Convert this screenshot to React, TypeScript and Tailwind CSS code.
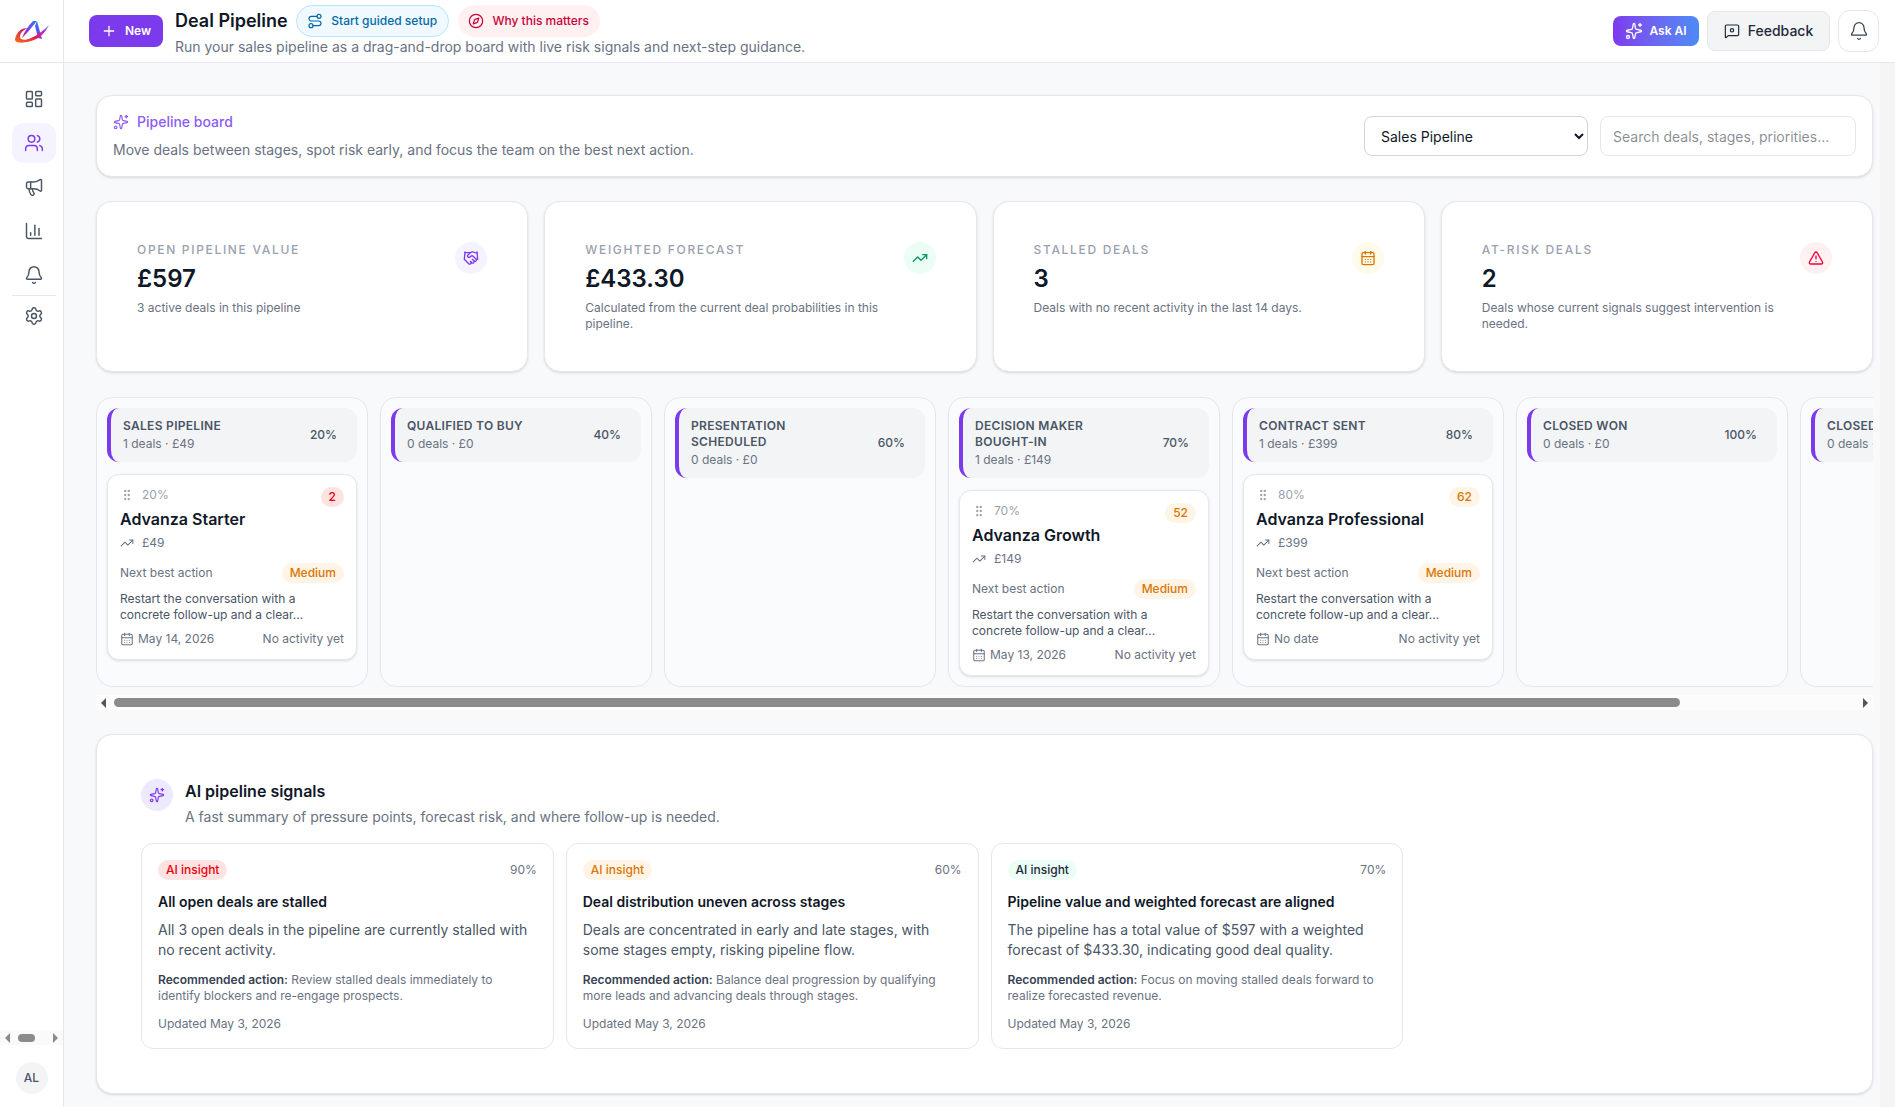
import {
  Bell,
  CalendarDays,
  ChartColumn,
  Compass,
  GripVertical,
  Handshake,
  LayoutDashboard,
  Megaphone,
  Plus,
  Route,
  Settings,
  Sparkles,
  TrendingUp,
  TriangleAlert,
  Users,
} from "lucide-react";

type Deal = {
  pct: string;
  name: string;
  amount: string;
  score: string;
  scoreColor: string;
  date: string;
};

type Stage = {
  title: string;
  sub: string;
  pct: string;
  deal?: Deal;
};

const stages: Stage[] = [
  {
    title: "Sales Pipeline",
    sub: "1 deals · £49",
    pct: "20%",
    deal: {
      pct: "20%",
      name: "Advanza Starter",
      amount: "£49",
      score: "2",
      scoreColor: "bg-red-100 text-red-600",
      date: "May 14, 2026",
    },
  },
  { title: "Qualified to Buy", sub: "0 deals · £0", pct: "40%" },
  { title: "Presentation Scheduled", sub: "0 deals · £0", pct: "60%" },
  {
    title: "Decision Maker Bought-In",
    sub: "1 deals · £149",
    pct: "70%",
    deal: {
      pct: "70%",
      name: "Advanza Growth",
      amount: "£149",
      score: "52",
      scoreColor: "bg-[#fff4e5] text-[#d97706]",
      date: "May 13, 2026",
    },
  },
  {
    title: "Contract Sent",
    sub: "1 deals · £399",
    pct: "80%",
    deal: {
      pct: "80%",
      name: "Advanza Professional",
      amount: "£399",
      score: "62",
      scoreColor: "bg-[#fff4e5] text-[#d97706]",
      date: "No date",
    },
  },
  { title: "Closed Won", sub: "0 deals · £0", pct: "100%" },
  { title: "Closed Lost", sub: "0 deals · £0", pct: "0%" },
];

const stats = [
  {
    label: "Open pipeline value",
    value: "£597",
    desc: "3 active deals in this pipeline",
    icon: Handshake,
    color: "bg-violet-50 text-[#7c3aed]",
  },
  {
    label: "Weighted forecast",
    value: "£433.30",
    desc: "Calculated from the current deal probabilities in this pipeline.",
    icon: TrendingUp,
    color: "bg-emerald-50 text-emerald-600",
  },
  {
    label: "Stalled deals",
    value: "3",
    desc: "Deals with no recent activity in the last 14 days.",
    icon: CalendarDays,
    color: "bg-amber-50 text-[#d97706]",
  },
  {
    label: "At-risk deals",
    value: "2",
    desc: "Deals whose current signals suggest intervention is needed.",
    icon: TriangleAlert,
    color: "bg-rose-50 text-rose-600",
  },
];

const insights = [
  {
    pill: "bg-red-100 text-red-600",
    pct: "90%",
    title: "All open deals are stalled",
    body: "All 3 open deals in the pipeline are currently stalled with no recent activity.",
    action: "Review stalled deals immediately to identify blockers and re-engage prospects.",
  },
  {
    pill: "bg-[#fff4e5] text-[#d97706]",
    pct: "60%",
    title: "Deal distribution uneven across stages",
    body: "Deals are concentrated in early and late stages, with some stages empty, risking pipeline flow.",
    action: "Balance deal progression by qualifying more leads and advancing deals through stages.",
  },
  {
    pill: "bg-emerald-50 text-gray-800",
    pct: "70%",
    title: "Pipeline value and weighted forecast are aligned",
    body: "The pipeline has a total value of $597 with a weighted forecast of $433.30, indicating good deal quality.",
    action: "Focus on moving stalled deals forward to realize forecasted revenue.",
  },
];

function Logo() {
  return (
    <svg width="36" height="23" viewBox="0 0 36 23" fill="none">
      <defs>
        <linearGradient id="logoArm" x1="1" y1="0" x2="0" y2="1">
          <stop offset="0" stopColor="#2f7bf0" />
          <stop offset="0.6" stopColor="#7c3aed" />
          <stop offset="1" stopColor="#db2777" />
        </linearGradient>
        <linearGradient id="logoLeg" x1="0" y1="0" x2="0" y2="1">
          <stop offset="0" stopColor="#2f7bf0" />
          <stop offset="1" stopColor="#7c3aed" />
        </linearGradient>
        <linearGradient id="logoSwoosh" x1="0" y1="1" x2="1" y2="0">
          <stop offset="0" stopColor="#f97316" />
          <stop offset="0.45" stopColor="#e11d48" />
          <stop offset="0.75" stopColor="#c026d3" />
          <stop offset="1" stopColor="#38bdf8" />
        </linearGradient>
      </defs>
      <path d="M19 1h4L13 13c-2 2-3 3-5 5C10 12 14 6 19 1Z" fill="url(#logoArm)" />
      <path d="M23 1l5 18-4-1-3-12Z" fill="url(#logoLeg)" />
      <path
        d="M1 19C3 11 8 8 14 8 9 10 6 13 6 17c0 3 5 4 11 1 7-3 13-8 18-13-3 7-10 14-18 16C9 23 1 24 1 19Z"
        fill="url(#logoSwoosh)"
      />
    </svg>
  );
}

function Sidebar() {
  const items = [LayoutDashboard, Users, Megaphone, ChartColumn, Bell];
  return (
    <aside className="flex h-full w-16 shrink-0 flex-col border-r border-gray-200 bg-white">
      <div className="flex h-[63px] shrink-0 items-center justify-center border-b border-gray-200">
        <Logo />
      </div>
      <nav className="mt-4 flex flex-col gap-1 pl-3 pr-[7px]">
        {items.map((Icon, i) => (
          <div
            key={i}
            className={`flex h-10 items-center justify-center rounded-xl ${
              i === 1 ? "bg-violet-50 text-[#7c3aed]" : "text-gray-600"
            }`}
          >
            <Icon className="h-5 w-5" strokeWidth={1.75} />
          </div>
        ))}
        <div className="-mt-1 border-t border-gray-200" />
        <div className="flex h-8 items-center justify-center text-gray-600">
          <Settings className="h-5 w-5" strokeWidth={1.75} />
        </div>
      </nav>
      <div className="mt-auto flex h-[15px] items-center bg-[#fafafa] px-[5px]">
        <div className="h-0 w-0 border-y-[5px] border-r-[5px] border-y-transparent border-r-[#8b8b8b]" />
        <div className="ml-2 h-2 w-[17px] rounded-full bg-[#8b8b8b]" />
        <div className="ml-auto h-0 w-0 border-y-[5px] border-l-[5px] border-y-transparent border-l-[#8b8b8b]" />
      </div>
      <div className="flex h-[62px] shrink-0 justify-center pt-[17px]">
        <div className="flex h-8 w-8 items-center justify-center rounded-full bg-gray-100 text-xs font-medium text-gray-600">
          AL
        </div>
      </div>
    </aside>
  );
}

function FeedbackIcon() {
  return (
    <svg
      className="h-4 w-4"
      viewBox="0 0 24 24"
      fill="none"
      stroke="currentColor"
      strokeWidth={1.75}
      strokeLinecap="round"
      strokeLinejoin="round"
    >
      <path d="M22 17a2 2 0 0 1-2 2H6.828a2 2 0 0 0-1.414.586l-2.202 2.202A.71.71 0 0 1 2 21.286V5a2 2 0 0 1 2-2h16a2 2 0 0 1 2 2z" />
      <circle cx="12" cy="11" r="2.5" />
    </svg>
  );
}

function TopBar() {
  return (
    <header className="flex h-[63px] shrink-0 items-start border-b border-gray-200 bg-white pl-[25px] pr-4">
      <button className="mt-[15px] flex h-8 w-[74px] items-center justify-center gap-2 rounded-lg bg-[#7c3aed] text-xs font-semibold text-white">
        <Plus className="h-4 w-4" strokeWidth={2} />
        New
      </button>
      <div className="ml-3 mt-[5px]">
        <div className="flex items-center gap-[9px]">
          <h1 className="text-lg font-semibold leading-8 text-gray-900">Deal Pipeline</h1>
          <span className="-ml-[1px] flex h-8 w-[153px] items-center justify-center gap-2 rounded-full border border-sky-200 bg-sky-50 text-xs font-medium text-sky-700">
            <Route className="h-4 w-4" strokeWidth={1.75} />
            Start guided setup
          </span>
          <span className="flex h-8 w-[142px] items-center justify-center gap-2 rounded-full bg-rose-50 text-xs font-medium text-rose-700">
            <Compass className="h-4 w-4" strokeWidth={1.75} />
            Why this matters
          </span>
        </div>
        <p className="text-sm leading-5 text-gray-500">
          Run your sales pipeline as a drag-and-drop board with live risk signals and next-step
          guidance.
        </p>
      </div>
      <div className="ml-auto mt-[10px] flex items-center gap-2">
        <button className="flex h-[30px] w-[86px] items-center justify-center gap-1.5 rounded-lg bg-gradient-to-r from-[#7c3aed] to-[#4a8af7] text-xs font-semibold text-white">
          <Sparkles className="h-[18px] w-[18px]" strokeWidth={1.75} />
          Ask AI
        </button>
        <button className="flex h-10 w-[123px] items-center justify-center gap-2 rounded-lg border border-gray-200 bg-gray-100 text-sm font-medium text-gray-800">
          <FeedbackIcon />
          Feedback
        </button>
        <button className="flex h-[42px] w-[41px] items-center justify-center rounded-xl border border-gray-200 bg-white text-gray-700">
          <Bell className="h-5 w-5" strokeWidth={1.5} />
        </button>
      </div>
    </header>
  );
}

function DealCard({ deal }: { deal: Deal }) {
  return (
    <div className="mt-3 rounded-xl border border-gray-200 bg-white px-3 py-3 shadow-sm">
      <div className="flex items-start justify-between">
        <div className="flex items-center gap-2 text-xs leading-4 text-gray-400">
          <GripVertical className="h-3.5 w-3.5" strokeWidth={2} />
          {deal.pct}
        </div>
        <span
          className={`flex h-5 items-center justify-center rounded-full px-2 text-xs font-medium ${deal.scoreColor}`}
        >
          {deal.score}
        </span>
      </div>
      <h3 className="text-base font-semibold leading-6 text-gray-900">{deal.name}</h3>
      <div className="mt-1 flex items-center gap-2 text-xs leading-4 text-gray-500">
        <TrendingUp className="h-3.5 w-3.5" strokeWidth={1.75} />
        {deal.amount}
      </div>
      <div className="mt-3 flex items-center justify-between text-xs">
        <span className="text-gray-500">Next best action</span>
        <span className="flex h-5 items-center rounded-full bg-[#fff4e5] px-2 font-medium text-[#d97706]">
          Medium
        </span>
      </div>
      <p className="mt-2 text-xs leading-4 text-gray-600">
        Restart the conversation with a concrete follow-up and a clear...
      </p>
      <div className="mt-2 flex items-center justify-between text-xs leading-4 text-gray-500">
        <span className="flex items-center gap-1">
          <CalendarDays className="h-3.5 w-3.5" strokeWidth={1.75} />
          {deal.date}
        </span>
        <span>No activity yet</span>
      </div>
    </div>
  );
}

function Board() {
  return (
    <div>
      <div className="flex gap-3 overflow-hidden">
        {stages.map((s) => (
          <div
            key={s.title}
            className="h-[290px] w-[272px] shrink-0 rounded-2xl border border-gray-200 bg-[#fafbfd] p-2.5"
          >
            <div className="flex items-center justify-between rounded-xl border-l-4 border-[#7c3aed] bg-gray-100 py-2.5 pl-3 pr-3">
              <div className="min-w-0">
                <div className="w-[150px] text-xs font-semibold uppercase leading-4 tracking-wide text-gray-600">
                  {s.title}
                </div>
                <div className="mt-0.5 whitespace-nowrap text-xs leading-4 text-gray-500">{s.sub}</div>
              </div>
              <span className="rounded-full px-2 text-xs font-medium leading-5 text-gray-600">{s.pct}</span>
            </div>
            {s.deal && <DealCard deal={s.deal} />}
          </div>
        ))}
      </div>
      <div className="mt-[8px] flex h-[15px] items-center bg-[#fcfcfc] pl-[5px] pr-[5px]">
        <div className="h-0 w-0 border-y-[5px] border-r-[5px] border-y-transparent border-r-[#555]" />
        <div className="ml-[8px] h-[9px] w-[1566px] rounded-full bg-[#8b8b8b]" />
        <div className="ml-auto h-0 w-0 border-y-[5px] border-l-[5px] border-y-transparent border-l-[#555]" />
      </div>
    </div>
  );
}

export default function App() {
  return (
    <div
      className="flex h-screen w-full overflow-hidden bg-[#f8f9fb] text-gray-900"
      style={{ fontFamily: "Inter, 'Liberation Sans', sans-serif" }}
    >
      <Sidebar />
      <div className="flex min-w-0 flex-1 flex-col">
        <TopBar />
        <div className="flex min-h-0 flex-1">
          <main className="min-w-0 flex-1 overflow-hidden pl-8 pr-[7px] pt-8">
            {/* Board intro */}
            <section className="flex h-[82px] items-center justify-between rounded-2xl border border-gray-200 bg-white pl-4 pr-4 shadow-sm">
              <div>
                <div className="flex items-center gap-2 text-sm font-medium leading-5 text-[#8b5cf6]">
                  <Sparkles className="h-4 w-4" strokeWidth={1.75} />
                  Pipeline board
                </div>
                <p className="mt-2 text-sm leading-5 text-gray-500">
                  Move deals between stages, spot risk early, and focus the team on the best next action.
                </p>
              </div>
              <div className="flex gap-3">
                <select className="h-10 w-[224px] rounded-lg border border-gray-300 bg-white pl-3 text-sm text-gray-900">
                  <option>Sales Pipeline</option>
                </select>
                <input
                  className="h-10 w-[256px] rounded-lg border border-gray-200 bg-white px-3 text-sm"
                  placeholder="Search deals, stages, priorities..."
                />
              </div>
            </section>

            {/* Stats */}
            <section className="mt-6 grid grid-cols-4 gap-4">
              {stats.map((s) => (
                <div
                  key={s.label}
                  className="flex h-[171px] items-start justify-between rounded-2xl border border-gray-200 bg-white p-10 shadow-sm"
                >
                  <div className="w-[300px]">
                    <div className="text-xs font-medium uppercase leading-4 tracking-[0.14em] text-gray-400">
                      {s.label}
                    </div>
                    <div className="mt-[5px] text-2xl font-semibold leading-8 text-gray-900">{s.value}</div>
                    <p className="mt-[5px] text-xs leading-4 text-gray-500">{s.desc}</p>
                  </div>
                  <div className={`flex h-8 w-8 items-center justify-center rounded-full ${s.color}`}>
                    <s.icon className="h-4 w-4" strokeWidth={2} />
                  </div>
                </div>
              ))}
            </section>

            <div className="mt-[25px]">
              <Board />
            </div>

            {/* AI signals */}
            <section className="mt-6 rounded-2xl border border-gray-200 bg-white p-11 shadow-sm">
              <div className="flex gap-3">
                <div className="flex h-8 w-8 shrink-0 items-center justify-center rounded-full bg-violet-100 text-[#7c3aed]">
                  <Sparkles className="h-4 w-4" strokeWidth={1.75} />
                </div>
                <div>
                  <h2 className="text-base font-semibold leading-6 text-gray-900">AI pipeline signals</h2>
                  <p className="mt-1 text-sm leading-5 text-gray-500">
                    A fast summary of pressure points, forecast risk, and where follow-up is needed.
                  </p>
                </div>
              </div>
              <div className="mt-4 grid grid-cols-4 gap-3">
                {insights.map((c) => (
                  <div key={c.title} className="rounded-xl border border-gray-200 bg-white p-4">
                    <div className="flex items-center justify-between text-xs">
                      <span className={`flex h-5 items-center rounded-full px-2 font-medium ${c.pill}`}>
                        AI insight
                      </span>
                      <span className="text-gray-500">{c.pct}</span>
                    </div>
                    <h3 className="mt-3 text-sm font-semibold leading-5 text-gray-900">{c.title}</h3>
                    <p className="mt-2 text-sm leading-5 text-gray-600">{c.body}</p>
                    <p className="mt-3 text-xs leading-4 text-gray-500">
                      <span className="font-semibold text-gray-700">Recommended action:</span> {c.action}
                    </p>
                    <p className="mt-3 text-xs leading-4 text-gray-500">Updated May 3, 2026</p>
                  </div>
                ))}
              </div>
            </section>
          </main>
          <div className="w-[15px] shrink-0 bg-[#f5f5f6]" />
        </div>
      </div>
    </div>
  );
}
